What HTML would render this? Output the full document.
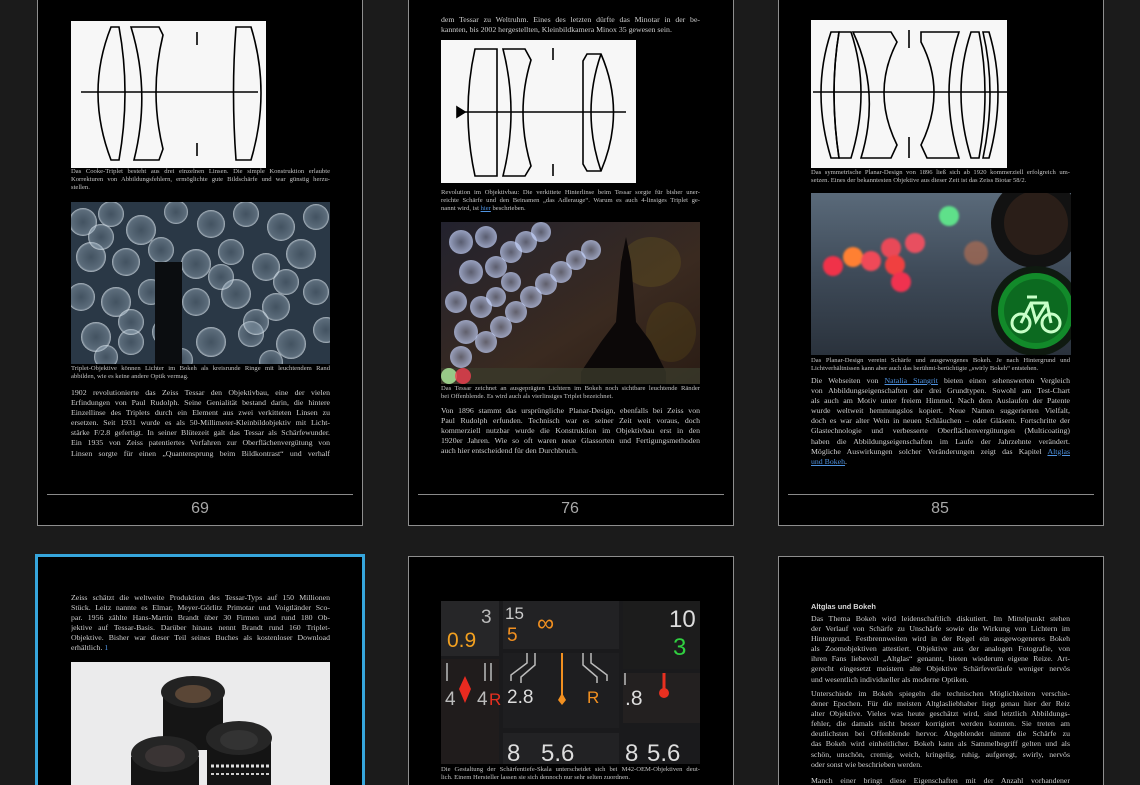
<!DOCTYPE html>
<html><head><meta charset="utf-8">
<style>
*{margin:0;padding:0;box-sizing:border-box}
html,body{width:1140px;height:785px;overflow:hidden}
body{background:#1b1b1b;position:relative;font-family:"Liberation Serif",serif}
.card{position:absolute;background:#000;border:1.5px solid #8e8e8e}
.bot{border-bottom:none}
.sel{border:3px solid #36a6dc;border-bottom:none}
.abs{position:absolute}
.hr{position:absolute;height:1px;background:#8a8a8a}
.pn{position:absolute;width:100px;text-align:center;font-family:"Liberation Sans",sans-serif;font-size:16px;color:#a8a8a8}
.b{position:absolute;width:259px;font-size:7.8px;line-height:10.1px;color:#cfcfcf}
.b div,.c div{text-align:justify;text-align-last:justify;white-space:nowrap;overflow:hidden}
.b div.l,.c div.l{text-align-last:left}
.c{position:absolute;width:259px;font-size:6.6px;line-height:8.2px;color:#c4c4c4}
a{color:#4f93e0;text-decoration:underline}
</style></head><body>

<div class="card" style="left:37px;top:-10px;width:326px;height:536px"></div>
<svg class="abs" style="left:71px;top:21px" width="195" height="147" viewBox="0 0 195 147">
<rect width="195" height="147" fill="#f7f7f7"/>
<g fill="none" stroke="#000" stroke-width="1.6">
<line x1="10" y1="71" x2="187" y2="71"/>
<path d="M40 6 L48 6 Q60 71 48 139 L40 139 Q14 71 40 6Z"/>
<path d="M60 6 L88 6 L92 14 Q78 71 92 128 L88 139 L63 139 Q80 71 60 6Z"/>
<line x1="126" y1="11" x2="126" y2="24"/><line x1="126" y1="122" x2="126" y2="135"/>
<path d="M165 6 L180 6 Q200 71 180 139 L165 139 Q160 71 165 6Z"/>
</g></svg>
<div class="c" style="left:71px;top:168px">
<div>Das Cooke-Triplet besteht aus drei einzelnen Linsen. Die simple Konstruktion erlaubte</div>
<div>Korrekturen von Abbildungsfehlern, ermöglichte gute Bildschärfe und war günstig herzu-</div>
<div class="l">stellen.</div></div>
<svg class="abs" style="left:71px;top:202px" width="259" height="162">
<defs><radialGradient id="bk" cx="50%" cy="50%" r="50%"><stop offset="0" stop-color="#8fa4b4" stop-opacity=".25"/><stop offset=".85" stop-color="#a8bccc" stop-opacity=".4"/><stop offset="1" stop-color="#e6eef4" stop-opacity=".75"/></radialGradient></defs>
<rect width="259" height="162" fill="#2a3846"/>
<g fill="url(#bk)">
<circle cx="12" cy="20" r="14"/><circle cx="40" cy="12" r="13"/><circle cx="70" cy="28" r="15"/><circle cx="105" cy="10" r="12"/><circle cx="140" cy="22" r="14"/><circle cx="175" cy="12" r="13"/><circle cx="210" cy="25" r="14"/><circle cx="245" cy="15" r="13"/>
<circle cx="20" cy="55" r="15"/><circle cx="55" cy="60" r="14"/><circle cx="90" cy="48" r="13"/><circle cx="125" cy="62" r="15"/><circle cx="160" cy="50" r="13"/><circle cx="195" cy="65" r="14"/><circle cx="230" cy="52" r="15"/>
<circle cx="10" cy="95" r="14"/><circle cx="45" cy="100" r="15"/><circle cx="80" cy="90" r="13"/><circle cx="125" cy="100" r="14"/><circle cx="165" cy="92" r="15"/><circle cx="205" cy="105" r="14"/><circle cx="245" cy="90" r="13"/>
<circle cx="25" cy="135" r="15"/><circle cx="60" cy="140" r="13"/><circle cx="95" cy="130" r="14"/><circle cx="140" cy="140" r="15"/><circle cx="180" cy="132" r="13"/><circle cx="220" cy="142" r="15"/><circle cx="255" cy="128" r="13"/>
<circle cx="35" cy="155" r="12"/><circle cx="110" cy="158" r="12"/><circle cx="200" cy="160" r="12"/>
<circle cx="30" cy="35" r="13"/><circle cx="150" cy="75" r="13"/><circle cx="215" cy="80" r="13"/><circle cx="60" cy="120" r="13"/><circle cx="185" cy="120" r="13"/>
</g>
<rect x="84" y="60" width="27" height="102" fill="#0b0d10"/>
</svg>
<div class="c" style="left:71px;top:365px">
<div>Triplet-Objektive können Lichter im Bokeh als kreisrunde Ringe mit leuchtendem Rand</div>
<div class="l">abbilden, wie es keine andere Optik vermag.</div></div>
<div class="b" style="left:71px;top:388px">
<div>1902 revolutionierte das Zeiss Tessar den Objektivbau, eine der vielen</div>
<div>Erfindungen von Paul Rudolph. Seine Genialität bestand darin, die hintere</div>
<div>Einzellinse des Triplets durch ein Element aus zwei verkitteten Linsen zu</div>
<div>ersetzen. Seit 1931 wurde es als 50-Millimeter-Kleinbildobjektiv mit Licht-</div>
<div>stärke F/2.8 gefertigt. In seiner Blütezeit galt das Tessar als Schärfewunder.</div>
<div>Ein 1935 von Zeiss patentiertes Verfahren zur Oberflächenvergütung von</div>
<div>Linsen sorgte für einen „Quantensprung beim Bildkontrast“ und verhalf</div></div>
<div class="hr" style="left:47px;top:494px;width:306px"></div>
<div class="pn" style="left:150px;top:500px">69</div>

<div class="card" style="left:408px;top:-10px;width:326px;height:536px"></div>
<div class="b" style="left:441px;top:15px">
<div>dem Tessar zu Weltruhm. Eines des letzten dürfte das Minotar in der be-</div>
<div class="l">kannten, bis 2002 hergestellten, Kleinbildkamera Minox 35 gewesen sein.</div></div>
<svg class="abs" style="left:441px;top:40px" width="195" height="143" viewBox="0 0 195 143">
<rect width="195" height="143" fill="#f7f7f7"/>
<g fill="none" stroke="#000" stroke-width="1.6">
<line x1="18" y1="72" x2="185" y2="72"/><path d="M16 67 L24 72 L16 77Z" fill="#000"/>
<path d="M34 9 L56 9 L56 136 L34 136 Q20 72 34 9Z"/>
<path d="M62 9 L84 9 L90 20 Q74 72 90 126 L84 136 L62 136 Q78 72 62 9Z"/>
<line x1="112" y1="8" x2="112" y2="20"/><line x1="112" y1="124" x2="112" y2="136"/>
<path d="M146 14 L160 14 Q185 72 160 131 L146 131 L142 124 L142 21Z"/>
<path d="M160 14 Q140 72 160 131"/>
</g></svg>
<div class="c" style="left:441px;top:189px">
<div>Revolution im Objektivbau: Die verkittete Hinterlinse beim Tessar sorgte für bisher uner-</div>
<div>reichte Schärfe und den Beinamen „das Adlerauge“. Warum es auch 4-linsiges Triplet ge-</div>
<div class="l">nannt wird, ist <a>hier</a> beschrieben.</div></div>
<svg class="abs" style="left:441px;top:222px" width="259" height="162">
<defs><linearGradient id="g2" x1="0" y1="0" x2="1" y2="1"><stop offset="0" stop-color="#22222e"/><stop offset=".6" stop-color="#3a2a20"/><stop offset="1" stop-color="#2a1c14"/></linearGradient>
<radialGradient id="bb"><stop offset="0" stop-color="#b8c8f0" stop-opacity=".35"/><stop offset="1" stop-color="#c8d6ff" stop-opacity=".7"/></radialGradient></defs>
<rect width="259" height="162" fill="url(#g2)"/>
<ellipse cx="210" cy="40" rx="30" ry="25" fill="#6a5a20" opacity=".35"/>
<ellipse cx="230" cy="110" rx="25" ry="30" fill="#5a4818" opacity=".35"/>
<g fill="url(#bb)">
<circle cx="20" cy="20" r="12"/><circle cx="45" cy="15" r="11"/><circle cx="30" cy="50" r="12"/><circle cx="15" cy="80" r="11"/><circle cx="25" cy="110" r="12"/><circle cx="20" cy="135" r="11"/>
<circle cx="55" cy="45" r="11"/><circle cx="70" cy="30" r="11"/><circle cx="85" cy="20" r="11"/><circle cx="100" cy="10" r="10"/>
<circle cx="45" cy="120" r="11"/><circle cx="60" cy="105" r="11"/><circle cx="75" cy="90" r="11"/><circle cx="90" cy="75" r="11"/><circle cx="105" cy="62" r="11"/><circle cx="120" cy="50" r="11"/><circle cx="135" cy="38" r="10"/><circle cx="150" cy="28" r="10"/>
<circle cx="40" cy="85" r="11"/><circle cx="55" cy="75" r="10"/><circle cx="70" cy="60" r="10"/>
</g>
<path d="M140 162 L140 150 L160 120 L175 100 L180 40 L185 15 L190 40 L195 100 L210 120 L225 150 L225 162Z" fill="#0c0808"/>
<rect x="0" y="146" width="259" height="16" fill="#3a3a2a" opacity=".8"/>
<circle cx="8" cy="154" r="8" fill="#b0f0a0" opacity=".8"/><circle cx="22" cy="154" r="8" fill="#f04050" opacity=".8"/>
</svg>
<div class="c" style="left:441px;top:385px">
<div>Das Tessar zeichnet an ausgeprägten Lichtern im Bokeh noch sichtbare leuchtende Ränder</div>
<div class="l">bei Offenblende. Es wird auch als vierlinsiges Triplet bezeichnet.</div></div>
<div class="b" style="left:441px;top:406px">
<div>Von 1896 stammt das ursprüngliche Planar-Design, ebenfalls bei Zeiss von</div>
<div>Paul Rudolph erfunden. Technisch war es seiner Zeit weit voraus, doch</div>
<div>kommerziell nutzbar wurde die Konstruktion im Objektivbau erst in den</div>
<div>1920er Jahren. Wie so oft waren neue Glassorten und Fertigungsmethoden</div>
<div class="l">auch hier entscheidend für den Durchbruch.</div></div>
<div class="hr" style="left:418px;top:494px;width:306px"></div>
<div class="pn" style="left:520px;top:500px">76</div>

<div class="card" style="left:778px;top:-10px;width:326px;height:536px"></div>
<svg class="abs" style="left:811px;top:20px" width="196" height="148" viewBox="0 0 196 148">
<rect width="196" height="148" fill="#f7f7f7"/>
<g fill="none" stroke="#000" stroke-width="1.6">
<line x1="2" y1="72" x2="196" y2="72"/>
<path d="M20 12 L28 12 Q18 72 28 138 L20 138 Q0 72 20 12Z"/>
<path d="M28 12 L40 12 Q60 72 40 138 L28 138 Q18 72 28 12Z"/>
<path d="M42 12 L80 12 L86 22 Q60 72 86 125 L80 138 L50 138 Q70 72 42 12Z"/>
<line x1="98" y1="10" x2="98" y2="28"/><line x1="98" y1="117" x2="98" y2="138"/>
<path d="M110 12 L148 12 Q128 72 148 138 L116 138 L110 125 Q136 72 110 22Z"/>
<path d="M160 12 L168 12 Q180 72 168 138 L160 138 Q140 72 160 12Z"/>
<path d="M172 12 L178 12 Q196 72 178 138 L172 138 Q186 72 172 12Z"/>
</g></svg>
<div class="c" style="left:811px;top:169px">
<div>Das symmetrische Planar-Design von 1896 ließ sich ab 1920 kommerziell erfolgreich um-</div>
<div class="l">setzen. Eines der bekanntesten Objektive aus dieser Zeit ist das Zeiss Biotar 58/2.</div></div>
<svg class="abs" style="left:811px;top:193px" width="260" height="162">
<defs><linearGradient id="g3" x1="0" y1="0" x2="0" y2="1"><stop offset="0" stop-color="#5a6a7a"/><stop offset=".5" stop-color="#3e4a58"/><stop offset="1" stop-color="#2a323c"/></linearGradient>
<filter id="bl"><feGaussianBlur stdDeviation="1"/></filter></defs>
<rect width="260" height="162" fill="url(#g3)"/>
<g filter="url(#bl)">
<circle cx="138" cy="23" r="10" fill="#5ee08a"/>
<circle cx="22" cy="73" r="10" fill="#f0304a"/><circle cx="42" cy="64" r="10" fill="#ff8030"/><circle cx="60" cy="68" r="10" fill="#f04858"/><circle cx="80" cy="55" r="10" fill="#e84858"/><circle cx="84" cy="72" r="10" fill="#f04040"/><circle cx="104" cy="50" r="10" fill="#e85060"/><circle cx="90" cy="89" r="10" fill="#f03050"/>
<circle cx="165" cy="60" r="12" fill="#c07050" opacity=".6"/>
</g>
<circle cx="225" cy="30" r="45" fill="#121212"/><circle cx="225" cy="30" r="32" fill="#2a1e18"/>
<circle cx="225" cy="118" r="45" fill="#0f1a10"/><circle cx="225" cy="118" r="38" fill="#128a2a"/><circle cx="225" cy="118" r="32" fill="#0c6a20"/>
<g fill="none" stroke="#c8ffc8" stroke-width="3">
<circle cx="210" cy="130" r="9"/><circle cx="240" cy="130" r="9"/>
<path d="M210 130 L220 110 L236 110 L240 130 M220 110 L225 128 L236 110 M216 104 L226 104"/>
</g>
</svg>
<div class="c" style="left:811px;top:357px">
<div>Das Planar-Design vereint Schärfe und ausgewogenes Bokeh. Je nach Hintergrund und</div>
<div class="l">Lichtverhältnissen kann aber auch das berühmt-berüchtigte „swirly Bokeh“ entstehen.</div></div>
<div class="b" style="left:811px;top:376px">
<div>Die Webseiten von <a>Natalia Stangrit</a> bieten einen sehenswerten Vergleich</div>
<div>von Abbildungseigenschaften der drei Grundtypen. Sowohl am Test-Chart</div>
<div>als auch am Motiv unter freiem Himmel. Nach dem Auslaufen der Patente</div>
<div>wurde weltweit hemmungslos kopiert. Neue Namen suggerierten Vielfalt,</div>
<div>doch es war alter Wein in neuen Schläuchen – oder Gläsern. Fortschritte der</div>
<div>Glastechnologie und verbesserte Oberflächenvergütungen (Multicoating)</div>
<div>haben die Abbildungseigenschaften im Laufe der Jahrzehnte verändert.</div>
<div>Mögliche Auswirkungen solcher Veränderungen zeigt das Kapitel <a>Altglas</a></div>
<div class="l"><a>und Bokeh</a>.</div></div>
<div class="hr" style="left:788px;top:494px;width:306px"></div>
<div class="pn" style="left:890px;top:500px">85</div>

<div class="card sel" style="left:35px;top:554px;width:330px;height:231px"></div>
<div class="b" style="left:71px;top:593px">
<div>Zeiss schätzt die weltweite Produktion des Tessar-Typs auf 150 Millionen</div>
<div>Stück. Leitz nannte es Elmar, Meyer-Görlitz Primotar und Voigtländer Sco-</div>
<div>par. 1956 zählte Hans-Martin Brandt über 30 Firmen und rund 180 Ob-</div>
<div>jektive auf Tessar-Basis. Darüber hinaus nennt Brandt rund 160 Triplet-</div>
<div>Objektive. Bisher war dieser Teil seines Buches als kostenloser Download</div>
<div class="l">erhältlich. <a style="text-decoration:none">1</a></div></div>
<svg class="abs" style="left:71px;top:662px" width="259" height="123">
<rect width="259" height="123" fill="#ebebec"/>
<rect x="92" y="28" width="60" height="60" fill="#151515"/>
<ellipse cx="122" cy="30" rx="32" ry="16" fill="#222"/><ellipse cx="122" cy="32" rx="18" ry="9" fill="#5a4636"/>
<rect x="60" y="95" width="68" height="40" fill="#151515"/>
<ellipse cx="94" cy="92" rx="34" ry="18" fill="#252525"/><ellipse cx="94" cy="94" rx="20" ry="11" fill="#3a3434"/>
<rect x="136" y="75" width="64" height="60" fill="#141414"/>
<ellipse cx="168" cy="76" rx="33" ry="17" fill="#262626"/><ellipse cx="168" cy="78" rx="19" ry="10" fill="#333"/>
<line x1="140" y1="104" x2="198" y2="104" stroke="#ddd" stroke-width="3" stroke-dasharray="3 2"/>
<line x1="140" y1="112" x2="198" y2="112" stroke="#ccc" stroke-width="2" stroke-dasharray="3 2"/>
</svg>

<div class="card bot" style="left:408px;top:556px;width:326px;height:229px"></div>
<svg class="abs" style="left:441px;top:601px" width="259" height="163" font-family="Liberation Sans, sans-serif">
<rect width="259" height="163" fill="#1a1a1c"/>
<rect x="0" y="0" width="58" height="55" fill="#262628"/>
<rect x="62" y="0" width="116" height="48" fill="#222224"/>
<rect x="62" y="52" width="116" height="75" fill="#1e1e20"/>
<rect x="62" y="132" width="116" height="31" fill="#222224"/>
<rect x="182" y="0" width="77" height="68" fill="#1c1c1c"/>
<rect x="182" y="72" width="77" height="50" fill="#232020"/>
<rect x="0" y="58" width="58" height="105" fill="#201c1c"/>
<text x="40" y="22" fill="#bbb" font-size="19">3</text>
<text x="6" y="46" fill="#f2a020" font-size="21">0.9</text>
<text x="64" y="18" fill="#ccc" font-size="17">15</text>
<text x="66" y="40" fill="#f29020" font-size="19">5</text>
<text x="96" y="30" fill="#f29020" font-size="24">∞</text>
<text x="228" y="26" fill="#ddd" font-size="24">10</text>
<text x="232" y="54" fill="#30d040" font-size="24">3</text>
<text x="4" y="104" fill="#bbb" font-size="19">4</text>
<text x="36" y="104" fill="#bbb" font-size="19">4</text><text x="48" y="104" fill="#e83020" font-size="17">R</text>
<text x="66" y="102" fill="#ddd" font-size="19">2.8</text>
<text x="146" y="102" fill="#f29020" font-size="17">R</text>
<text x="184" y="104" fill="#ddd" font-size="21">.8</text>
<text x="66" y="160" fill="#ddd" font-size="24">8</text>
<text x="100" y="160" fill="#ddd" font-size="24">5.6</text>
<text x="184" y="160" fill="#ddd" font-size="24">8</text>
<text x="206" y="160" fill="#ddd" font-size="24">5.6</text>
<path d="M24 75 L30 88 L24 102 L18 88Z" fill="#e82a20"/>
<line x1="121" y1="52" x2="121" y2="98" stroke="#f29020" stroke-width="2"/>
<path d="M121 92 L125 99 L121 104 L117 99Z" fill="#f29020"/>
<line x1="223" y1="72" x2="223" y2="88" stroke="#e83020" stroke-width="3"/><circle cx="223" cy="92" r="5" fill="#e83020"/>
<g stroke="#bbb" stroke-width="1.5" fill="none">
<path d="M6 62 V80 M44 62 V80 M50 62 V80 M86 52 V62 L70 74 V80 M94 52 V64 L80 76 V82 M150 52 V62 L166 74 V80 M142 52 V64 L156 76 V82 M184 72 V84"/>
</g>
</svg>
<div class="c" style="left:441px;top:766px">
<div>Die Gestaltung der Schärfentiefe-Skala unterscheidet sich bei M42-OEM-Objektiven deut-</div>
<div class="l">lich. Einem Hersteller lassen sie sich dennoch nur sehr selten zuordnen.</div></div>

<div class="card bot" style="left:778px;top:556px;width:326px;height:229px"></div>
<div class="abs" style="left:811px;top:602px;font-family:'Liberation Sans',sans-serif;font-size:7.4px;font-weight:bold;color:#d8d8d8">Altglas und Bokeh</div>
<div class="b" style="left:811px;top:614px">
<div>Das Thema Bokeh wird leidenschaftlich diskutiert. Im Mittelpunkt stehen</div>
<div>der Verlauf von Schärfe zu Unschärfe sowie die Wirkung von Lichtern im</div>
<div>Hintergrund. Festbrennweiten wird in der Regel ein ausgewogeneres Bokeh</div>
<div>als Zoomobjektiven attestiert. Objektive aus der analogen Fotografie, von</div>
<div>ihren Fans liebevoll „Altglas“ genannt, bieten wiederum eigene Reize. Art-</div>
<div>gerecht eingesetzt meistern alte Objektive Schärfeverläufe weniger nervös</div>
<div class="l">und wesentlich individueller als moderne Optiken.</div></div>
<div class="b" style="left:811px;top:689px">
<div>Unterschiede im Bokeh spiegeln die technischen Möglichkeiten verschie-</div>
<div>dener Epochen. Für die meisten Altglasliebhaber liegt genau hier der Reiz</div>
<div>alter Objektive. Vieles was heute geschätzt wird, sind letztlich Abbildungs-</div>
<div>fehler, die damals nicht besser korrigiert werden konnten. Sie treten am</div>
<div>deutlichsten bei Offenblende hervor. Abgeblendet nimmt die Schärfe zu</div>
<div>das Bokeh wird einheitlicher. Bokeh kann als Sammelbegriff gelten und als</div>
<div>schön, unschön, cremig, weich, kringelig, ruhig, aufgeregt, swirly, nervös</div>
<div class="l">oder sonst wie beschrieben werden.</div></div>
<div class="b" style="left:811px;top:776px;height:9px;overflow:hidden">
<div>Manch einer bringt diese Eigenschaften mit der Anzahl vorhandener</div></div>
</body></html>
